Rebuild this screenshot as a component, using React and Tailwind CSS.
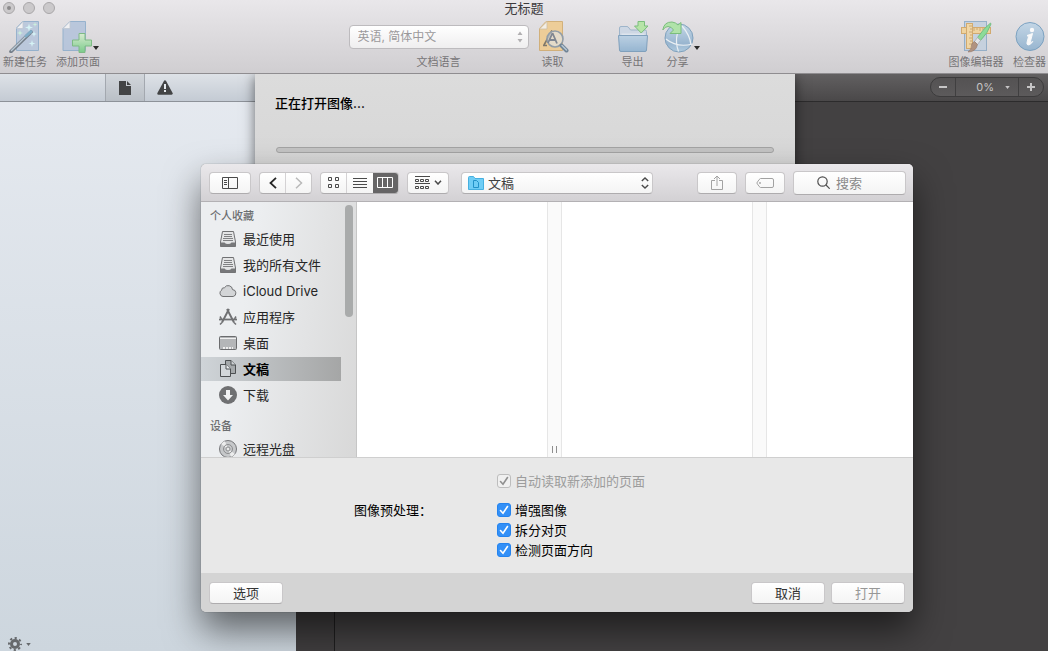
import { useState } from "react";

const favorites = [
    { name: "最近使用", icon: TrayIcon },
    { name: "我的所有文件", icon: TrayIcon },
    { name: "iCloud Drive", icon: CloudIcon },
    { name: "应用程序", icon: AppsIcon },
    { name: "桌面", icon: DesktopIcon },
    { name: "文稿", icon: DocumentsIcon },
    { name: "下载", icon: DownloadIcon },
];

const devices = [{ name: "远程光盘", icon: DiscIcon }];

const buttonFace =
    "rounded-[4px] border border-[#c9c7c9] border-b-[#aeacae] bg-linear-to-b from-white to-[#f4f4f4]";

/* ---------- Main toolbar icons ---------- */

function WandIcon() {
    return (
        <svg width="32" height="32" viewBox="0 0 32 32" aria-hidden="true">
            <path d="M13.500 .5H29.500V29.500H7.500V7Z" fill="#b6c6dc" stroke="#8aabca" />
            <path d="M14 .5V7.500H7.500Z" fill="#f3f4f6" stroke="#b9c3cf" strokeWidth=".8" />
            <path d="M2 30.500 22 11" stroke="#64707c" strokeWidth="3.600" strokeLinecap="round" />
            <path d="M2.500 29.500 21.500 10.800" stroke="#b4c6d4" strokeWidth="1.400" strokeLinecap="round" />
            <path d="M17 15 22 10.500" stroke="#6fa6c4" strokeWidth="3" strokeLinecap="round" />
            <path
                d="M20 2.500l.9 3.100 3.100.9-3.100.9-.9 3.100-.9-3.100-3.100-.9 3.100-.9ZM23 19l.8 2.700 2.700.8-2.700.8-.8 2.700-.8-2.700-2.700-.8 2.700-.8ZM25 10l.7 2.300 2.300.7-2.300.7-.7 2.300-.7-2.300-2.300-.7 2.300-.7Z"
                fill="#d5f8fa"
            />
            <path d="M11 9l.7 2.300 2.300.7-2.300.7-.7 2.300-.7-2.300L8 12l2.300-.7ZM26 1l.6 1.900 1.900.6-1.900.6L26 6l-.6-1.900-1.900-.6 1.900-.6Z" fill="#c9f5dc" />
        </svg>
    );
}

function AddPageIcon() {
    return (
        <svg width="32" height="32" viewBox="0 0 32 32" aria-hidden="true">
            <defs>
                <linearGradient id="plusFill" x2="0" y2="1">
                    <stop stopColor="#d8efcf" />
                    <stop offset="1" stopColor="#6cca7e" />
                </linearGradient>
            </defs>
            <path d="M8 .5H23.500V29.500H1V7.500Z" fill="#b3c3db" stroke="#8aabca" />
            <path d="M8 .5V7.500H1Z" fill="#f3f4f6" stroke="#b9c3cf" strokeWidth=".8" />
            <path d="M17 12.500h6v6.500h6.500v6H23v6.500h-6V25h-6.500v-6H17Z" fill="url(#plusFill)" stroke="#6fb577" strokeLinejoin="round" />
        </svg>
    );
}

function ReadIcon() {
    return (
        <svg width="32" height="32" viewBox="0 0 32 32" aria-hidden="true">
            <path d="M9 .5H25.500V29.500H2.500V7.500Z" fill="#f0cb8c" stroke="#d0a96a" />
            <path d="M10 .5V8H2.500Z" fill="#f6f1e6" stroke="#cbb998" strokeWidth=".8" />
            <path d="M7 24 15 9.500M6 24.500h4" fill="none" stroke="#6f6858" strokeWidth="1.600" />
            <circle cx="18" cy="18" r="8" fill="#dfe8ee" fillOpacity=".6" stroke="#86939e" strokeWidth="1.600" />
            <path d="M15.500 12 20 22.500M11 22 15.500 12M13 19h6" fill="none" stroke="#707884" strokeWidth="1.800" />
            <path d="M24.500 24.500 29.500 29.500" stroke="#5f778c" strokeWidth="4" strokeLinecap="round" />
            <path d="M25 24.500 29.500 29" stroke="#b6c8d4" strokeWidth="1.400" strokeLinecap="round" />
        </svg>
    );
}

function ExportIcon() {
    return (
        <svg width="32" height="32" viewBox="0 0 32 32" aria-hidden="true">
            <defs>
                <linearGradient id="folderFill" x2="0" y2="1">
                    <stop stopColor="#b6cfe4" />
                    <stop offset="1" stopColor="#8bb0d0" />
                </linearGradient>
            </defs>
            <path d="M2.500 17V7Q2.500 5.500 4 5.500H10Q11 5.500 12 7L13.500 9H28Q29.500 9 29.500 10.500V17Z" fill="#cbd7e5" stroke="#93aec7" />
            <path d="M4.500 12.500h23V18h-23Z" fill="#dfe7f0" />
            <path d="M1.500 14.500H30.500L29.500 29Q29.500 30.500 28 30.500H4Q2.500 30.500 2.500 29Z" fill="url(#folderFill)" stroke="#7197b8" strokeLinejoin="round" />
            <path d="M21 .5h6.500v4.500h3.500L24.200 12 17.500 5H21Z" fill="#b0e69e" stroke="#6bb86c" strokeLinejoin="round" />
        </svg>
    );
}

function ShareGlobeIcon() {
    return (
        <svg width="32" height="32" viewBox="0 0 32 32" aria-hidden="true">
            <defs>
                <linearGradient id="globeFill" x2="0" y2="1">
                    <stop stopColor="#c0d6e8" />
                    <stop offset=".7" stopColor="#8eb0ce" />
                    <stop offset="1" stopColor="#a9c9e0" />
                </linearGradient>
            </defs>
            <circle cx="17" cy="17" r="14" fill="url(#globeFill)" stroke="#7098b8" />
            <path d="M4 18Q15 27 30.500 23M16.500 30.500Q13 21 15.500 12M20 5Q28 14 29 24" fill="none" stroke="#eef4f8" strokeWidth="1.200" />
            <path
                d="M.8 9Q2 .8 10 1 14 1.500 16 4L19 1.500V12.500H8L11.500 9Q9.500 5.500 6 5.500 3 5.500.8 9Z"
                fill="#a8e4a0"
                stroke="#6bb86c"
                strokeLinejoin="round"
            />
        </svg>
    );
}

function EditorIcon() {
    return (
        <svg width="32" height="32" viewBox="0 0 32 32" aria-hidden="true">
            <rect x="4.500" y=".5" width="22" height="29" fill="#c3d0df" stroke="#8aa8c4" />
            <rect x="1.500" y="6.500" width="29" height="6" fill="#f2d294" stroke="#d0a25c" />
            <path d="M14 7v3M17 7v2M20 7v3M23 7v2M26 7v3" stroke="#b98f55" strokeWidth=".8" />
            <rect x="6.500" y="2.500" width="6" height="25" fill="#f5d69c" stroke="#d0a25c" />
            <path d="M12 5h-3M12 8h-2M12 11h-3M12 14h-2M12 17h-3M12 20h-2M12 23h-3" stroke="#b98f55" strokeWidth=".8" />
            <path d="M30.500 2Q24 7 17.500 16.500L20.500 19.500Q28 12 31 3Z" fill="#7edb8d" stroke="#57b06b" strokeWidth=".8" />
            <path d="M17.500 16.500 20.500 19.500 17.500 23.500 14.500 20.500Z" fill="#e3e6ea" stroke="#a3a3a6" strokeWidth=".8" />
            <path d="M14.500 20.500 17.500 23.500Q16 31 8 31 12 28 11.500 24 12 21.500 14.500 20.500Z" fill="#aa8770" stroke="#866350" strokeWidth=".6" />
        </svg>
    );
}

function InspectorIcon() {
    return (
        <svg width="32" height="32" viewBox="0 0 32 32" aria-hidden="true">
            <defs>
                <linearGradient id="infoFill" x2="0" y2="1">
                    <stop stopColor="#bfd5e7" />
                    <stop offset="1" stopColor="#8db0ce" />
                </linearGradient>
            </defs>
            <circle cx="16" cy="15.500" r="14" fill="url(#infoFill)" stroke="#6b98bc" />
            <circle cx="18" cy="9" r="2.200" fill="#fff" />
            <path d="M13 14.500Q16 13.500 18.500 12.500L16.300 21Q16.500 22 18.800 20.500 16 24.500 14 24 12.500 23.500 13 21.500L14.500 15.800Z" fill="#fff" stroke="#fff" />
        </svg>
    );
}

/* ---------- Sidebar icons ---------- */

function TrayIcon() {
    return (
        <svg width="18" height="18" viewBox="0 0 18 18" aria-hidden="true">
            <path d="M3.500 1.500h11L16.500 12v4.500h-15V12Z" fill="#e4e5e6" stroke="#707173" strokeLinejoin="round" />
            <path d="M1.500 12.500H5.500Q6.500 14 9 14T12.500 12.500H16.500V16.500H1.500Z" fill="#77787a" />
            <path d="M5 4.500h8M5 6.500h8M4 8.500h10M4 10.500h10" stroke="#808183" />
        </svg>
    );
}

function CloudIcon() {
    return (
        <svg width="18" height="18" viewBox="0 0 18 18" aria-hidden="true">
            <path
                d="M4 14.500A3.400 3.400 0 0 1 2.600 8.200 2.600 2.600 0 0 1 5.500 5.700 4.300 4.300 0 0 1 13.500 7.600 3.500 3.500 0 0 1 14.200 14.500Z"
                fill="#d3d5d7"
                stroke="#707173"
            />
        </svg>
    );
}

function AppsIcon() {
    return (
        <svg width="18" height="18" viewBox="0 0 18 18" fill="none" stroke="#707173" aria-hidden="true">
            <path d="M10 1 3 14.500M8 1 15 14.500" strokeWidth="1.900" />
            <path d="M0 11.500h18" strokeWidth="1.800" />
            <path d="M3 14.500 1 16.500M15 14.500 17 16.500M1 8.500 2.500 11M17 8.500 15.500 11" strokeWidth="1.500" />
        </svg>
    );
}

function DesktopIcon() {
    return (
        <svg width="18" height="18" viewBox="0 0 18 18" aria-hidden="true">
            <rect x=".5" y="2.500" width="17" height="13" rx="1" fill="#b4b6b8" stroke="#6b6c6e" />
            <path d="M1 4.500h16" stroke="#f0f0f0" />
            <path d="M4 14h10" stroke="#eee" strokeWidth="2" strokeDasharray="2 1" />
        </svg>
    );
}

function DocumentsIcon() {
    return (
        <svg width="18" height="18" viewBox="0 0 18 18" stroke="#4d5052" strokeLinejoin="round" aria-hidden="true">
            <path d="M6.500.5H12L16.500 5v8.500h-10Z" fill="#a5a9ab" />
            <path d="M12 .5V5h4.500" fill="#ced2d4" />
            <path d="M1.500 4.500H7L11.500 9v7.500h-10Z" fill="#d3d7da" />
            <path d="M7 4.500V9h4.500" fill="#eceef0" />
        </svg>
    );
}

function DownloadIcon() {
    return (
        <svg width="18" height="18" viewBox="0 0 18 18" aria-hidden="true">
            <circle cx="9" cy="9" r="9" fill="#6f7072" />
            <path d="M7 4h4v5h3L9 14.500 4 9h3Z" fill="#f1f2f3" />
        </svg>
    );
}

function DiscIcon() {
    return (
        <svg width="18" height="18" viewBox="0 0 18 18" fill="none" aria-hidden="true">
            <circle cx="9" cy="9" r="8.500" fill="#c6c8ca" stroke="#76777a" />
            <path d="M9 9 2 4A8.500 8.500 0 0 1 6 1.200ZM9 9l7 5a8.500 8.500 0 0 1-4 2.800Z" fill="#eceded" />
            <circle cx="9" cy="9" r="4.500" stroke="#8c8d8f" />
            <circle cx="9" cy="9" r="2" fill="#e9eaea" stroke="#8c8d8f" />
        </svg>
    );
}

function Caret({ className }) {
    return (
        <svg width="6" height="4" viewBox="0 0 6 4" className={className} aria-hidden="true">
            <path d="M0 0h6L3 4Z" fill="currentColor" />
        </svg>
    );
}

/* ---------- Window parts ---------- */

function ToolbarItem({ label, icon: Icon, width, menu }) {
    return (
        <button className={`relative flex flex-col items-center text-[11px] leading-4 text-[#767476] ${width}`}>
            <span className="opacity-85">
                <Icon />
            </span>
            <span className="mt-px whitespace-nowrap">{label}</span>
            {menu && <Caret className={`absolute top-[25px] text-[#2a2a2a] ${menu}`} />}
        </button>
    );
}

function MainToolbar() {
    return (
        <header className="relative z-10 border-b border-[#8f8d90] bg-linear-to-b from-[#e9e7ea] to-[#d0ced1]">
            <div className="relative flex h-[15px] items-center justify-center">
                <div className="absolute left-[3px] flex gap-2">
                    <button aria-label="关闭" className="grid size-3 place-items-center rounded-full border border-[#a9a7a9] bg-[#cbc9cb]">
                        <span className="size-1 rounded-full bg-[#8b898b]" />
                    </button>
                    <button aria-label="最小化" className="size-3 rounded-full border border-[#a9a7a9] bg-[#cbc9cb]" />
                    <button aria-label="缩放" className="size-3 rounded-full border border-[#a9a7a9] bg-[#cbc9cb]" />
                </div>
                <h1 className="text-[13px] leading-4 text-[#3c3a3c]">无标题</h1>
            </div>
            <div className="flex justify-between pt-[6px] pr-[2px] pb-[3px] pl-[3px]">
                <div className="flex gap-[9px]">
                    <ToolbarItem label="新建任务" icon={WandIcon} width="w-[44px]" />
                    <ToolbarItem label="添加页面" icon={AddPageIcon} width="w-[44px]" menu="right-px" />
                </div>
                <div className="flex pr-[6px]">
                    <div className="mr-2 flex w-[180px] flex-col items-center">
                        <div className="relative my-[4px] w-full">
                            <select
                                id="language"
                                className="block h-6 w-full appearance-none rounded-[4px] border border-[#bdbbbe] bg-linear-to-b from-white to-[#efeeef] px-2 text-[12px] text-[#9b999b]"
                            >
                                <option>英语, 简体中文</option>
                            </select>
                            <svg width="6" height="12" viewBox="0 0 6 12" className="pointer-events-none absolute top-[6px] right-[6px]" aria-hidden="true">
                                <path d="M.5 4 3 .5 5.500 4ZM.5 8 3 11.500 5.500 8Z" fill="#b1afb1" />
                            </svg>
                        </div>
                        <label htmlFor="language" className="mt-px text-[11px] leading-4 text-[#767476]">
                            文档语言
                        </label>
                    </div>
                    <ToolbarItem label="读取" icon={ReadIcon} width="mr-12 w-8" />
                    <ToolbarItem label="导出" icon={ExportIcon} width="mr-[13px] w-8" />
                    <ToolbarItem label="分享" icon={ShareGlobeIcon} width="w-8" menu="-right-[6px]" />
                </div>
                <div className="flex gap-[9px]">
                    <ToolbarItem label="图像编辑器" icon={EditorIcon} width="w-[56px]" />
                    <ToolbarItem label="检查器" icon={InspectorIcon} width="w-[33px]" />
                </div>
            </div>
        </header>
    );
}

function PagesPane() {
    return (
        <section className="flex w-[296px] flex-col bg-linear-to-b from-[#e6eaf0] to-[#cdd6de]">
            <div className="flex h-7 border-b border-[#8d9299] bg-linear-to-b from-[#dee2e7] to-[#c4cbd4] pl-[105px]">
                <button aria-label="页面" className="grid w-10 place-items-center border-x border-[#a3a8af] bg-linear-to-b from-[#d2d6db] to-[#b9bfc6]">
                    <svg width="12" height="14" viewBox="0 0 12 14" aria-hidden="true">
                        <path d="M0 0h7v5h5v9H0Z" fill="#434445" />
                        <path d="M8 0 12 4H8Z" fill="#434445" />
                    </svg>
                </button>
                <button aria-label="警告" className="grid w-10 place-items-center">
                    <svg width="16" height="15" viewBox="0 0 16 15" aria-hidden="true">
                        <path d="M8 1.500 14.500 13.500H1.500Z" fill="#434445" stroke="#434445" strokeWidth="2.500" strokeLinejoin="round" />
                        <path d="M7 4h2v5H7ZM7 10h2v2H7Z" fill="#e6eaee" />
                    </svg>
                </button>
            </div>
            <button aria-label="操作" className="mt-auto flex items-center gap-1 self-start pl-2 text-[#66696c]">
                <svg width="14" height="14" viewBox="0 0 14 14" fill="none" stroke="currentColor" aria-hidden="true">
                    <circle cx="7" cy="7" r="3.500" strokeWidth="3" />
                    <circle cx="7" cy="7" r="6" strokeWidth="2" strokeDasharray="2.200 2.512" strokeDashoffset="1.100" />
                </svg>
                <Caret className="h-[3px] w-[5px]" />
            </button>
        </section>
    );
}

function ImagePane() {
    return (
        <section className="flex flex-1 flex-col bg-[#434142]">
            <div className="flex h-7 items-start justify-end border-b border-[#2c2b2c] bg-linear-to-b from-[#626061] to-[#4a4849] pt-[3px] pr-1 text-[#c6c5c6]">
                <div className="flex h-5 overflow-hidden rounded-full border border-[#3c3b3c] bg-linear-to-b from-[#545253] to-[#5c5a5b]">
                    <button aria-label="缩小" className="grid w-[25px] place-items-center border-r border-[#403f40]">
                        <span className="h-[2px] w-2 bg-current" />
                    </button>
                    <button className="flex w-[63px] items-center justify-end gap-[11px] border-r border-[#403f40] pr-2 text-[11px]">
                        0%
                        <Caret className="h-[3px] w-[5px]" />
                    </button>
                    <button aria-label="放大" className="grid w-6 place-items-center">
                        <svg width="8" height="8" viewBox="0 0 8 8" aria-hidden="true">
                            <path d="M4 0v8M0 4h8" stroke="currentColor" strokeWidth="2" />
                        </svg>
                    </button>
                </div>
            </div>
            <div className="w-[39px] flex-1 border-r border-[#1f1e1f] bg-[#403e3f]" />
        </section>
    );
}

function ProgressSheet() {
    return (
        <div className="absolute top-[74px] left-[255px] h-[110px] w-[540px] bg-linear-to-b from-[#dcdcdc] to-[#d6d6d6] px-5 pt-[19px] shadow-[0_2px_12px_rgba(0,0,0,0.55)]">
            <p id="opening" className="text-[13px] leading-5 font-medium text-black">
                正在打开图像...
            </p>
            <div role="progressbar" aria-labelledby="opening" className="mx-px mt-[34px] h-[6px] rounded-full border border-[#a3a3a3] bg-[#c4c4c4]" />
        </div>
    );
}

/* ---------- Open dialog ---------- */

function DialogToolbar() {
    const [view, setView] = useState("columns");
    const seg = "grid flex-1 place-items-center";
    return (
        <div className="flex h-[38px] items-center border-b border-[#b3b1b4] bg-linear-to-b from-[#eae8eb] to-[#d3d1d4] pr-[7px] pl-2 text-[#4a4a4a]">
            <button aria-label="边栏" className={`mr-2 grid h-[22px] w-[42px] place-items-center ${buttonFace}`}>
                <svg width="16" height="12" viewBox="0 0 16 12" fill="none" stroke="currentColor" aria-hidden="true">
                    <path d="M.5.5h15v11H.5ZM6.500.5v11M2 3.500h3M2 5.500h3M2 7.500h3" />
                </svg>
            </button>
            <div className={`mr-2 flex h-[22px] w-[53px] ${buttonFace}`}>
                <button aria-label="后退" className={`${seg} border-r border-[#d4d2d4]`}>
                    <svg width="8" height="12" viewBox="0 0 8 12" fill="none" stroke="#262626" strokeWidth="1.800" aria-hidden="true">
                        <path d="M7 .8 1.500 6 7 11.200" />
                    </svg>
                </button>
                <button aria-label="前进" disabled className={seg}>
                    <svg width="8" height="12" viewBox="0 0 8 12" fill="none" stroke="#b9b9b9" strokeWidth="1.500" aria-hidden="true">
                        <path d="M1 .8 6.500 6 1 11.200" />
                    </svg>
                </button>
            </div>
            <div className={`mr-2 flex h-[22px] w-[79px] overflow-hidden ${buttonFace}`}>
                <button
                    aria-label="图标"
                    onClick={() => setView("icons")}
                    className={`${seg} border-r border-[#d4d2d4] ${view === "icons" ? "bg-[#666566] text-white" : ""}`}
                >
                    <svg width="11" height="11" viewBox="0 0 11 11" fill="none" stroke="currentColor" aria-hidden="true">
                        <path d="M.5.5h3v3h-3ZM7.500.5h3v3h-3ZM.5 7.500h3v3h-3ZM7.500 7.500h3v3h-3Z" />
                    </svg>
                </button>
                <button
                    aria-label="列表"
                    onClick={() => setView("list")}
                    className={`${seg} ${view === "list" ? "bg-[#666566] text-white" : ""}`}
                >
                    <svg width="14" height="11" viewBox="0 0 14 11" stroke="currentColor" aria-hidden="true">
                        <path d="M0 1.500h14M0 4.500h14M0 7.500h14M0 10.500h14" />
                    </svg>
                </button>
                <button
                    aria-label="分栏"
                    onClick={() => setView("columns")}
                    className={`${seg} ${view === "columns" ? "bg-[#666566] text-white" : ""}`}
                >
                    <svg width="16" height="11" viewBox="0 0 16 11" fill="none" stroke="currentColor" aria-hidden="true">
                        <path d="M.5.5h15v10H.5ZM5.500.5v10M10.500.5v10" />
                    </svg>
                </button>
            </div>
            <button aria-label="分组" className={`mr-3 flex h-[22px] w-[42px] items-center justify-center gap-1 ${buttonFace}`}>
                <svg width="15" height="14" viewBox="0 0 15 14" fill="none" stroke="currentColor" aria-hidden="true">
                    <path d="M0 .5h15M.5 3.500h3v2h-3ZM5.500 3.500h3v2h-3ZM10.500 3.500h3v2h-3ZM0 7.500h15M.5 10.500h3v2h-3ZM5.500 10.500h3v2h-3ZM10.500 10.500h3v2h-3Z" />
                </svg>
                <svg width="8" height="5" viewBox="0 0 8 5" fill="none" stroke="currentColor" strokeWidth="1.500" aria-hidden="true">
                    <path d="M1 .7 4 4 7 .7" />
                </svg>
            </button>
            <div className="relative w-[192px]">
                <select aria-label="位置" className={`block h-[22px] w-full appearance-none pl-[26px] text-[13px] leading-5 text-[#3f3f3f] ${buttonFace}`}>
                    <option>文稿</option>
                </select>
                <svg width="16" height="14" viewBox="0 0 16 14" className="pointer-events-none absolute top-1 left-[7px]" aria-hidden="true">
                    <path d="M.5 1.500Q.5.500 1.500.500H5.500L7 2.500H15.500V13.500H.5Z" fill="#6fcdf5" stroke="#46b0e0" />
                    <path d="M5.500 4.500H8.500L10.500 6.500V11.500H5.500Z" fill="#6fcdf5" stroke="#2292c8" />
                </svg>
                <svg width="8" height="12" viewBox="0 0 8 12" fill="none" stroke="#4a4a4a" strokeWidth="1.400" className="pointer-events-none absolute top-[5px] right-1" aria-hidden="true">
                    <path d="M.8 4 4 1l3.200 3M.8 8 4 11l3.200-3" />
                </svg>
            </div>
            <div className="ml-auto flex items-center gap-2">
                <button aria-label="共享" className={`grid h-[22px] w-10 place-items-center ${buttonFace}`}>
                    <svg width="12" height="16" viewBox="0 0 12 16" fill="none" stroke="#a2a2a2" aria-hidden="true">
                        <path d="M4 5.500H.5v9h11v-9H8M6 11V1M3 4l3-3 3 3" />
                    </svg>
                </button>
                <button aria-label="标签" className={`grid h-[22px] w-10 place-items-center ${buttonFace}`}>
                    <svg width="18" height="10" viewBox="0 0 18 10" fill="none" stroke="#a2a2a2" aria-hidden="true">
                        <path d="M4.500.5H16Q17.500.5 17.500 2V8Q17.500 9.500 16 9.500H4.500Q3.500 9.500.8 5 3.500.5 4.500.5Z" />
                        <circle cx="4" cy="5" r=".6" />
                    </svg>
                </button>
                <label className={`flex h-6 w-[113px] items-center justify-center gap-[6px] ${buttonFace}`}>
                    <svg width="13" height="13" viewBox="0 0 13 13" fill="none" stroke="#505050" strokeWidth="1.200" aria-hidden="true">
                        <circle cx="5.500" cy="5.500" r="4.700" />
                        <path d="M9 9l3.700 3.700" />
                    </svg>
                    <input type="text" aria-label="搜索" placeholder="搜索" className="w-[46px] text-[13px] leading-5 outline-none placeholder:text-[#8a8a8a]" />
                </label>
            </div>
        </div>
    );
}

function SidebarGroup({ title, items, selected, onSelect }) {
    return (
        <div className="mb-[9px]">
            <h2 className="mb-px pl-[9px] text-[11px] leading-[18px] font-medium text-[#6c6e70]">{title}</h2>
            <ul>
                {items.map(({ name, icon: Icon }) => (
                    <li key={name} className="py-px">
                        <button
                            onClick={() => onSelect(name)}
                            className={`flex h-6 w-full items-center gap-[6px] pl-[18px] text-left text-[13px] ${
                                selected === name
                                    ? "bg-linear-to-r from-[#cfd4d8] to-[#a5a6a6] font-bold text-black"
                                    : "text-[#262626]"
                            }`}
                        >
                            <Icon />
                            <span className="pt-px">{name}</span>
                        </button>
                    </li>
                ))}
            </ul>
        </div>
    );
}

function Browser() {
    const [selected, setSelected] = useState("文稿");
    const strip = "flex w-[15px] items-end justify-center gap-[3px] border-x border-[#e6e6e6] bg-[#fafafa] pb-1";
    return (
        <div className="flex h-[255px] overflow-hidden bg-white">
            <aside className="flex w-[156px] justify-between border-r border-[#c6c6c6] bg-linear-100 from-[#eceef0] from-30% to-[#d8d8d8] pr-[3px]">
                <nav className="w-[140px] pt-[5px]">
                    <SidebarGroup title="个人收藏" items={favorites} selected={selected} onSelect={setSelected} />
                    <SidebarGroup title="设备" items={devices} selected={selected} onSelect={setSelected} />
                </nav>
                <div className="mt-[3px] h-[112px] w-2 rounded-full bg-[#a9abab]" />
            </aside>
            <div className="w-[190px]" />
            <div className={strip}>
                <span className="h-[7px] w-px bg-[#8e8e8e]" />
                <span className="h-[7px] w-px bg-[#8e8e8e]" />
            </div>
            <div className="w-[190px]" />
            <div className={strip} />
            <div className="flex-1" />
        </div>
    );
}

function CheckOption({ label, disabled }) {
    return (
        <label className={`flex h-5 items-center gap-1 ${disabled ? "text-[#9c9c9c]" : "text-black"}`}>
            <span className="relative block size-[14px]">
                <input
                    type="checkbox"
                    defaultChecked
                    disabled={disabled}
                    className="peer block size-[14px] appearance-none rounded-[3px] border border-[#bdbdbd] bg-white checked:border-[#2483ee] checked:bg-[#3390f7] disabled:border-[#bdbdbd] disabled:bg-[#f0f0f0]"
                />
                <svg
                    viewBox="0 0 14 14"
                    fill="none"
                    stroke="currentColor"
                    strokeWidth="1.600"
                    className={`pointer-events-none absolute inset-0 hidden peer-checked:block ${disabled ? "text-[#8f8f8f]" : "text-white"}`}
                    aria-hidden="true"
                >
                    <path d="M3.500 7.500 6 10.200 10.500 3.500" strokeLinecap="round" />
                </svg>
            </span>
            {label}
        </label>
    );
}

function OpenDialog() {
    return (
        <div
            role="dialog"
            aria-label="打开"
            className="absolute top-[164px] left-[201px] w-[712px] overflow-hidden rounded-[5px] bg-[#e8e8e8] shadow-[0_0_1px_rgba(0,0,0,0.6),0_18px_36px_rgba(0,0,0,0.55)]"
        >
            <DialogToolbar />
            <Browser />
            <div className="grid grid-cols-[143px_1fr] gap-y-[9px] border-t border-[#cfcfcf] py-[13px] pl-[153px] text-[13px] leading-5">
                <div className="col-start-2">
                    <CheckOption label="自动读取新添加的页面" disabled />
                </div>
                <span id="preprocess" className="col-start-1">
                    图像预处理：
                </span>
                <div role="group" aria-labelledby="preprocess">
                    <CheckOption label="增强图像" />
                    <CheckOption label="拆分对页" />
                    <CheckOption label="检测页面方向" />
                </div>
            </div>
            <div className="flex h-[39px] items-center gap-[6px] bg-[#d4d4d4] px-2 text-[13px] leading-[18px] text-[#333]">
                <button className={`mr-auto h-[22px] w-[74px] ${buttonFace}`}>选项</button>
                <button className={`h-[22px] w-[74px] ${buttonFace}`}>取消</button>
                <button disabled className={`h-[22px] w-[74px] text-[#979797] ${buttonFace}`}>
                    打开
                </button>
            </div>
        </div>
    );
}

export default function App() {
    return (
        <div className="relative flex min-h-screen flex-col overflow-hidden font-['Inter','Noto_Sans_CJK_SC',sans-serif]">
            <MainToolbar />
            <div className="flex flex-1">
                <PagesPane />
                <ImagePane />
            </div>
            <ProgressSheet />
            <OpenDialog />
        </div>
    );
}
